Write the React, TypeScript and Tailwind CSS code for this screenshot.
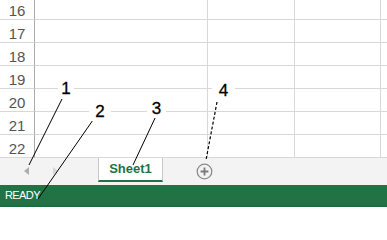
const rows = [16, 17, 18, 19, 20, 21, 22];

function Row({ n, first }: { n: number; first?: boolean }) {
  return (
    <div className={`flex ${first ? "h-[20px]" : "h-[23px]"}`}>
      <div className="w-[35px] shrink-0 flex items-end justify-center pb-[1px] border-r border-r-[#ababab] border-b border-b-[#d8d8d8] text-[15px] leading-none text-[#555]">
        <span>{n}</span>
      </div>
      <div className="w-[173px] shrink-0 border-r border-b border-[#d8d8d8]" />
      <div className="w-[87px] shrink-0 border-r border-b border-[#d8d8d8]" />
      <div className="w-[86px] shrink-0 border-r border-b border-[#d8d8d8]" />
      <div className="flex-1 border-b border-[#d8d8d8]" />
    </div>
  );
}

function Label({ text, className }: { text: string; className: string }) {
  return (
    <span
      className={`absolute h-[18px] bg-white text-center text-[17px] leading-none text-black [-webkit-text-stroke:0.3px_black] ${className}`}
    >
      {text}
    </span>
  );
}

export default function App() {
  return (
    <div
      className="relative w-[387px] h-[207px] overflow-hidden bg-white select-none"
      style={{ fontFamily: '"Liberation Sans", Arial, sans-serif' }}
    >
      {/* grid */}
      <div className="flex flex-col h-[158px]">
        {rows.map((n, i) => (
          <Row key={n} n={n} first={i === 0} />
        ))}
      </div>

      {/* sheet tabs */}
      <div className="flex items-stretch h-[27px] bg-[#f3f3f3]">
        <div className="w-[98px] shrink-0 flex items-center pb-[1px]">
          <svg width="6" height="8" viewBox="0 0 6 8" className="ml-[24px]">
            <path d="M5 0 L0 4 L5 8 Z" fill="#adadad" />
          </svg>
          <svg width="6" height="8" viewBox="0 0 6 8" className="ml-[22px]">
            <path d="M1 0 L6 4 L1 8 Z" fill="#d6d6d6" />
          </svg>
        </div>
        <div className="w-[65px] h-[24px] shrink-0 flex items-center justify-center bg-white border-x border-[#c8c8c8] border-b-2 border-b-[#217346] text-[13px] font-bold text-[#217346]">
          Sheet1
        </div>
        <div className="flex items-center pl-[33px] pb-[1px]">
          <svg width="17" height="17" viewBox="0 0 17 17">
            <circle cx="8.5" cy="8.5" r="7.3" fill="none" stroke="#8c8c8c" strokeWidth="1.3" />
            <path d="M8.5 4.6 V12.4 M4.6 8.5 H12.4" stroke="#7a7a7a" strokeWidth="1.8" />
          </svg>
        </div>
      </div>

      {/* status bar */}
      <div className="h-[22px] bg-[#217346] border-b-2 border-b-[#1d6b40] flex items-center px-[5px]">
        <span className="text-[11px] text-white tracking-[-0.6px]">READY</span>
      </div>

      {/* callouts */}
      <svg className="absolute inset-0" width="387" height="207" viewBox="0 0 387 207">
        <line x1="62" y1="99" x2="29" y2="165" stroke="#000" strokeWidth="1" />
        <line x1="93" y1="120" x2="38" y2="199" stroke="#000" strokeWidth="1" />
        <line x1="156" y1="116" x2="133" y2="165" stroke="#000" strokeWidth="1" />
        <line x1="217" y1="102" x2="206" y2="160" stroke="#000" strokeWidth="1.2" strokeDasharray="3 2" />
      </svg>
      <Label text="1" className="left-[58px] top-[80px] w-[16px]" />
      <Label text="2" className="left-[89px] top-[103px] w-[22px]" />
      <Label text="3" className="left-[147px] top-[100px] w-[19px]" />
      <Label text="4" className="left-[212px] top-[82px] w-[23px]" />
    </div>
  );
}
